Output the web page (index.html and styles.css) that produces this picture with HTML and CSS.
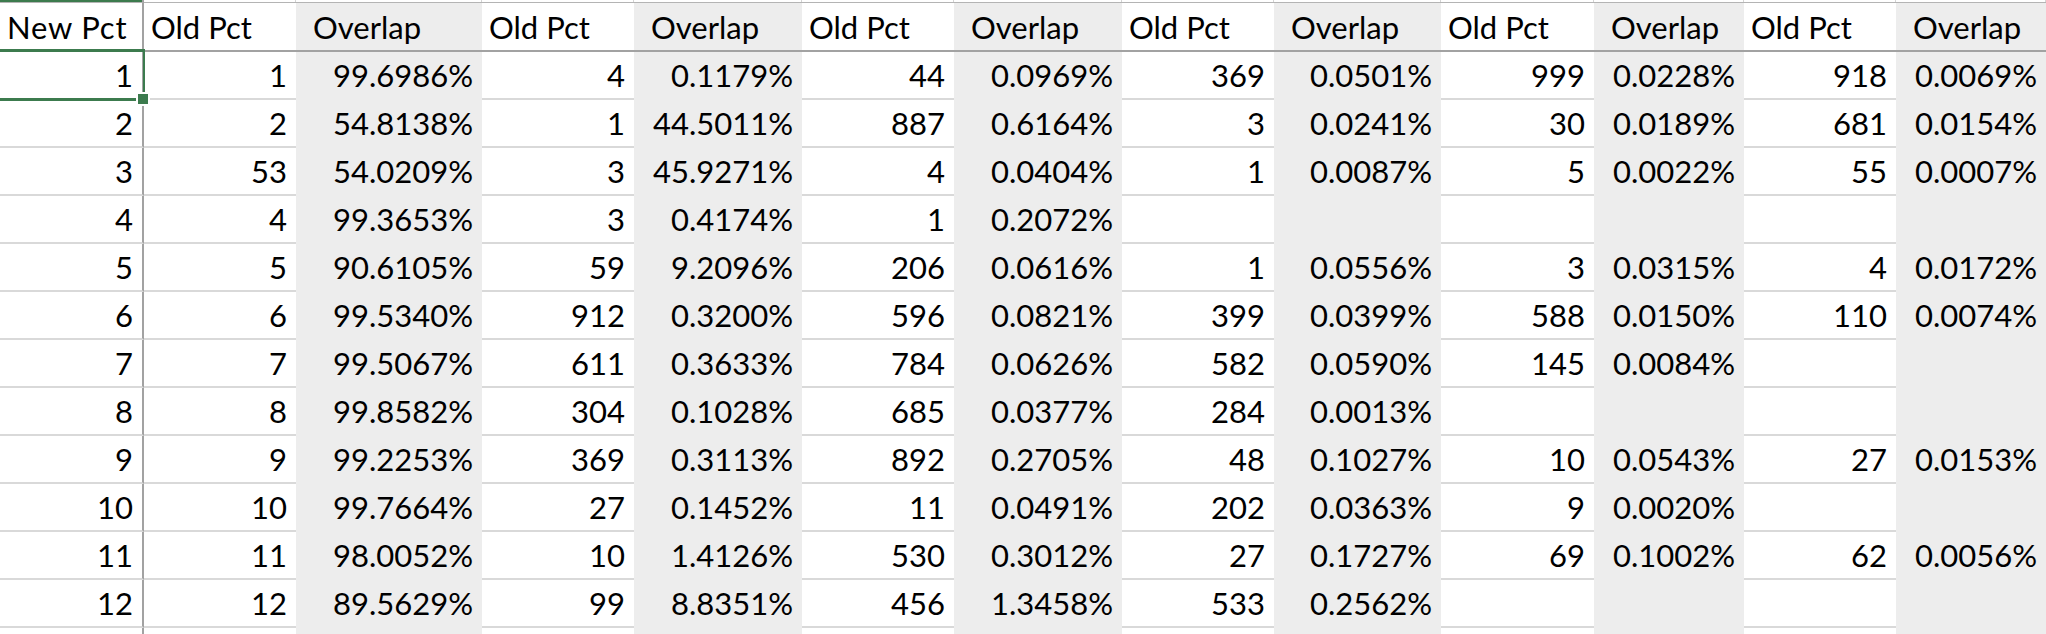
FILE: index.html
```html
<!DOCTYPE html>
<html>
<head>
<meta charset="utf-8">
<link rel="stylesheet" href="styles.css">
</head>
<body>
<div class="sheet">
  <div class="row top">
    <div class="cell a sel-col"></div><div class="cell"></div><div class="cell"></div><div class="cell"></div><div class="cell"></div><div class="cell"></div><div class="cell"></div><div class="cell"></div><div class="cell"></div><div class="cell"></div><div class="cell"></div><div class="cell"></div><div class="cell"></div>
  </div>
  <div class="row head">
    <div class="cell a hd first sel-col">New Pct</div>
    <div class="cell hd">Old Pct</div><div class="cell g hd ov">Overlap</div>
    <div class="cell hd">Old Pct</div><div class="cell g hd ov">Overlap</div>
    <div class="cell hd">Old Pct</div><div class="cell g hd ov">Overlap</div>
    <div class="cell hd">Old Pct</div><div class="cell g hd ov">Overlap</div>
    <div class="cell hd">Old Pct</div><div class="cell g hd ov">Overlap</div>
    <div class="cell hd">Old Pct</div><div class="cell g hd ov">Overlap</div>
  </div>
  <div class="row"><div class="cell a n">1</div><div class="cell n">1</div><div class="cell g n">99.6986%</div><div class="cell n">4</div><div class="cell g n">0.1179%</div><div class="cell n">44</div><div class="cell g n">0.0969%</div><div class="cell n">369</div><div class="cell g n">0.0501%</div><div class="cell n">999</div><div class="cell g n">0.0228%</div><div class="cell n">918</div><div class="cell g n">0.0069%</div></div>
  <div class="row"><div class="cell a n">2</div><div class="cell n">2</div><div class="cell g n">54.8138%</div><div class="cell n">1</div><div class="cell g n">44.5011%</div><div class="cell n">887</div><div class="cell g n">0.6164%</div><div class="cell n">3</div><div class="cell g n">0.0241%</div><div class="cell n">30</div><div class="cell g n">0.0189%</div><div class="cell n">681</div><div class="cell g n">0.0154%</div></div>
  <div class="row"><div class="cell a n">3</div><div class="cell n">53</div><div class="cell g n">54.0209%</div><div class="cell n">3</div><div class="cell g n">45.9271%</div><div class="cell n">4</div><div class="cell g n">0.0404%</div><div class="cell n">1</div><div class="cell g n">0.0087%</div><div class="cell n">5</div><div class="cell g n">0.0022%</div><div class="cell n">55</div><div class="cell g n">0.0007%</div></div>
  <div class="row"><div class="cell a n">4</div><div class="cell n">4</div><div class="cell g n">99.3653%</div><div class="cell n">3</div><div class="cell g n">0.4174%</div><div class="cell n">1</div><div class="cell g n">0.2072%</div><div class="cell n"></div><div class="cell g n"></div><div class="cell n"></div><div class="cell g n"></div><div class="cell n"></div><div class="cell g n"></div></div>
  <div class="row"><div class="cell a n">5</div><div class="cell n">5</div><div class="cell g n">90.6105%</div><div class="cell n">59</div><div class="cell g n">9.2096%</div><div class="cell n">206</div><div class="cell g n">0.0616%</div><div class="cell n">1</div><div class="cell g n">0.0556%</div><div class="cell n">3</div><div class="cell g n">0.0315%</div><div class="cell n">4</div><div class="cell g n">0.0172%</div></div>
  <div class="row"><div class="cell a n">6</div><div class="cell n">6</div><div class="cell g n">99.5340%</div><div class="cell n">912</div><div class="cell g n">0.3200%</div><div class="cell n">596</div><div class="cell g n">0.0821%</div><div class="cell n">399</div><div class="cell g n">0.0399%</div><div class="cell n">588</div><div class="cell g n">0.0150%</div><div class="cell n">110</div><div class="cell g n">0.0074%</div></div>
  <div class="row"><div class="cell a n">7</div><div class="cell n">7</div><div class="cell g n">99.5067%</div><div class="cell n">611</div><div class="cell g n">0.3633%</div><div class="cell n">784</div><div class="cell g n">0.0626%</div><div class="cell n">582</div><div class="cell g n">0.0590%</div><div class="cell n">145</div><div class="cell g n">0.0084%</div><div class="cell n"></div><div class="cell g n"></div></div>
  <div class="row"><div class="cell a n">8</div><div class="cell n">8</div><div class="cell g n">99.8582%</div><div class="cell n">304</div><div class="cell g n">0.1028%</div><div class="cell n">685</div><div class="cell g n">0.0377%</div><div class="cell n">284</div><div class="cell g n">0.0013%</div><div class="cell n"></div><div class="cell g n"></div><div class="cell n"></div><div class="cell g n"></div></div>
  <div class="row"><div class="cell a n">9</div><div class="cell n">9</div><div class="cell g n">99.2253%</div><div class="cell n">369</div><div class="cell g n">0.3113%</div><div class="cell n">892</div><div class="cell g n">0.2705%</div><div class="cell n">48</div><div class="cell g n">0.1027%</div><div class="cell n">10</div><div class="cell g n">0.0543%</div><div class="cell n">27</div><div class="cell g n">0.0153%</div></div>
  <div class="row"><div class="cell a n">10</div><div class="cell n">10</div><div class="cell g n">99.7664%</div><div class="cell n">27</div><div class="cell g n">0.1452%</div><div class="cell n">11</div><div class="cell g n">0.0491%</div><div class="cell n">202</div><div class="cell g n">0.0363%</div><div class="cell n">9</div><div class="cell g n">0.0020%</div><div class="cell n"></div><div class="cell g n"></div></div>
  <div class="row"><div class="cell a n">11</div><div class="cell n">11</div><div class="cell g n">98.0052%</div><div class="cell n">10</div><div class="cell g n">1.4126%</div><div class="cell n">530</div><div class="cell g n">0.3012%</div><div class="cell n">27</div><div class="cell g n">0.1727%</div><div class="cell n">69</div><div class="cell g n">0.1002%</div><div class="cell n">62</div><div class="cell g n">0.0056%</div></div>
  <div class="row"><div class="cell a n">12</div><div class="cell n">12</div><div class="cell g n">89.5629%</div><div class="cell n">99</div><div class="cell g n">8.8351%</div><div class="cell n">456</div><div class="cell g n">1.3458%</div><div class="cell n">533</div><div class="cell g n">0.2562%</div><div class="cell n"></div><div class="cell g n"></div><div class="cell n"></div><div class="cell g n"></div></div>
  <div class="row tail">
    <div class="cell a"></div><div class="cell"></div><div class="cell g"></div><div class="cell"></div><div class="cell g"></div><div class="cell"></div><div class="cell g"></div><div class="cell"></div><div class="cell g"></div><div class="cell"></div><div class="cell g"></div><div class="cell"></div><div class="cell g"></div>
  </div>
  <div class="selection"></div>
  <div class="handle"></div>
</div>
</body>
</html>
```

FILE: styles.css
```css
html, body {
  margin: 0;
  padding: 0;
  background: #ffffff;
  overflow: hidden;
}

.sheet {
  position: relative;
  width: 2046px;
  height: 634px;
  overflow: hidden;
  font-family: Lato, "Liberation Sans", sans-serif;
  font-size: 31px;
  color: #000000;
}

.row {
  display: grid;
  grid-template-columns: 144px 152px 186px 152px 168px 152px 168px 152px 167px 153px 150px 152px 1fr;
  height: 48px;
}

.cell {
  box-sizing: border-box;
  display: flex;
  align-items: center;
  background: #ffffff;
  border-bottom: 2px solid #d9d9d9;
  white-space: nowrap;
  overflow: hidden;
}

.cell.g {
  background: #ededed;
  border-bottom-color: #ededed;
}

.cell.a {
  border-right: 2px solid #a2a2a2;
}

.cell.n {
  justify-content: flex-end;
  padding-right: 9px;
}

/* top sliver of the previous row */
.row.top {
  height: 2px;
}

.row.top .cell {
  border-bottom: none;
  border-right: 1px solid #d4d4d4;
  background: #ffffff;
}

.row.top .cell.sel-col {
  background: #3c7b4e;
  border-right: 2px solid #a2a2a2;
}

/* header row */
.row.head {
  height: 50px;
}

.row.head .cell {
  border-top: 1px solid #b4b4b4;
  border-bottom: 2px solid #a2a2a2;
}

.cell.hd {
  padding-left: 7px;
}

.cell.hd.first {
  letter-spacing: 0.8px;
}

.cell.hd.ov {
  padding-left: 17px;
}

.row.tail {
  height: 6px;
}

.row.tail .cell {
  border-bottom: none;
}

/* active cell selection */
.selection {
  position: absolute;
  left: -4px;
  top: 49px;
  width: 149px;
  height: 52px;
  box-sizing: border-box;
  border: 3px solid #3c7b4e;
  border-right-width: 2px;
  pointer-events: none;
}

.handle {
  position: absolute;
  left: 136px;
  top: 92px;
  width: 10px;
  height: 10px;
  background: #3c7b4e;
  border: 2px solid #ffffff;
}
```
